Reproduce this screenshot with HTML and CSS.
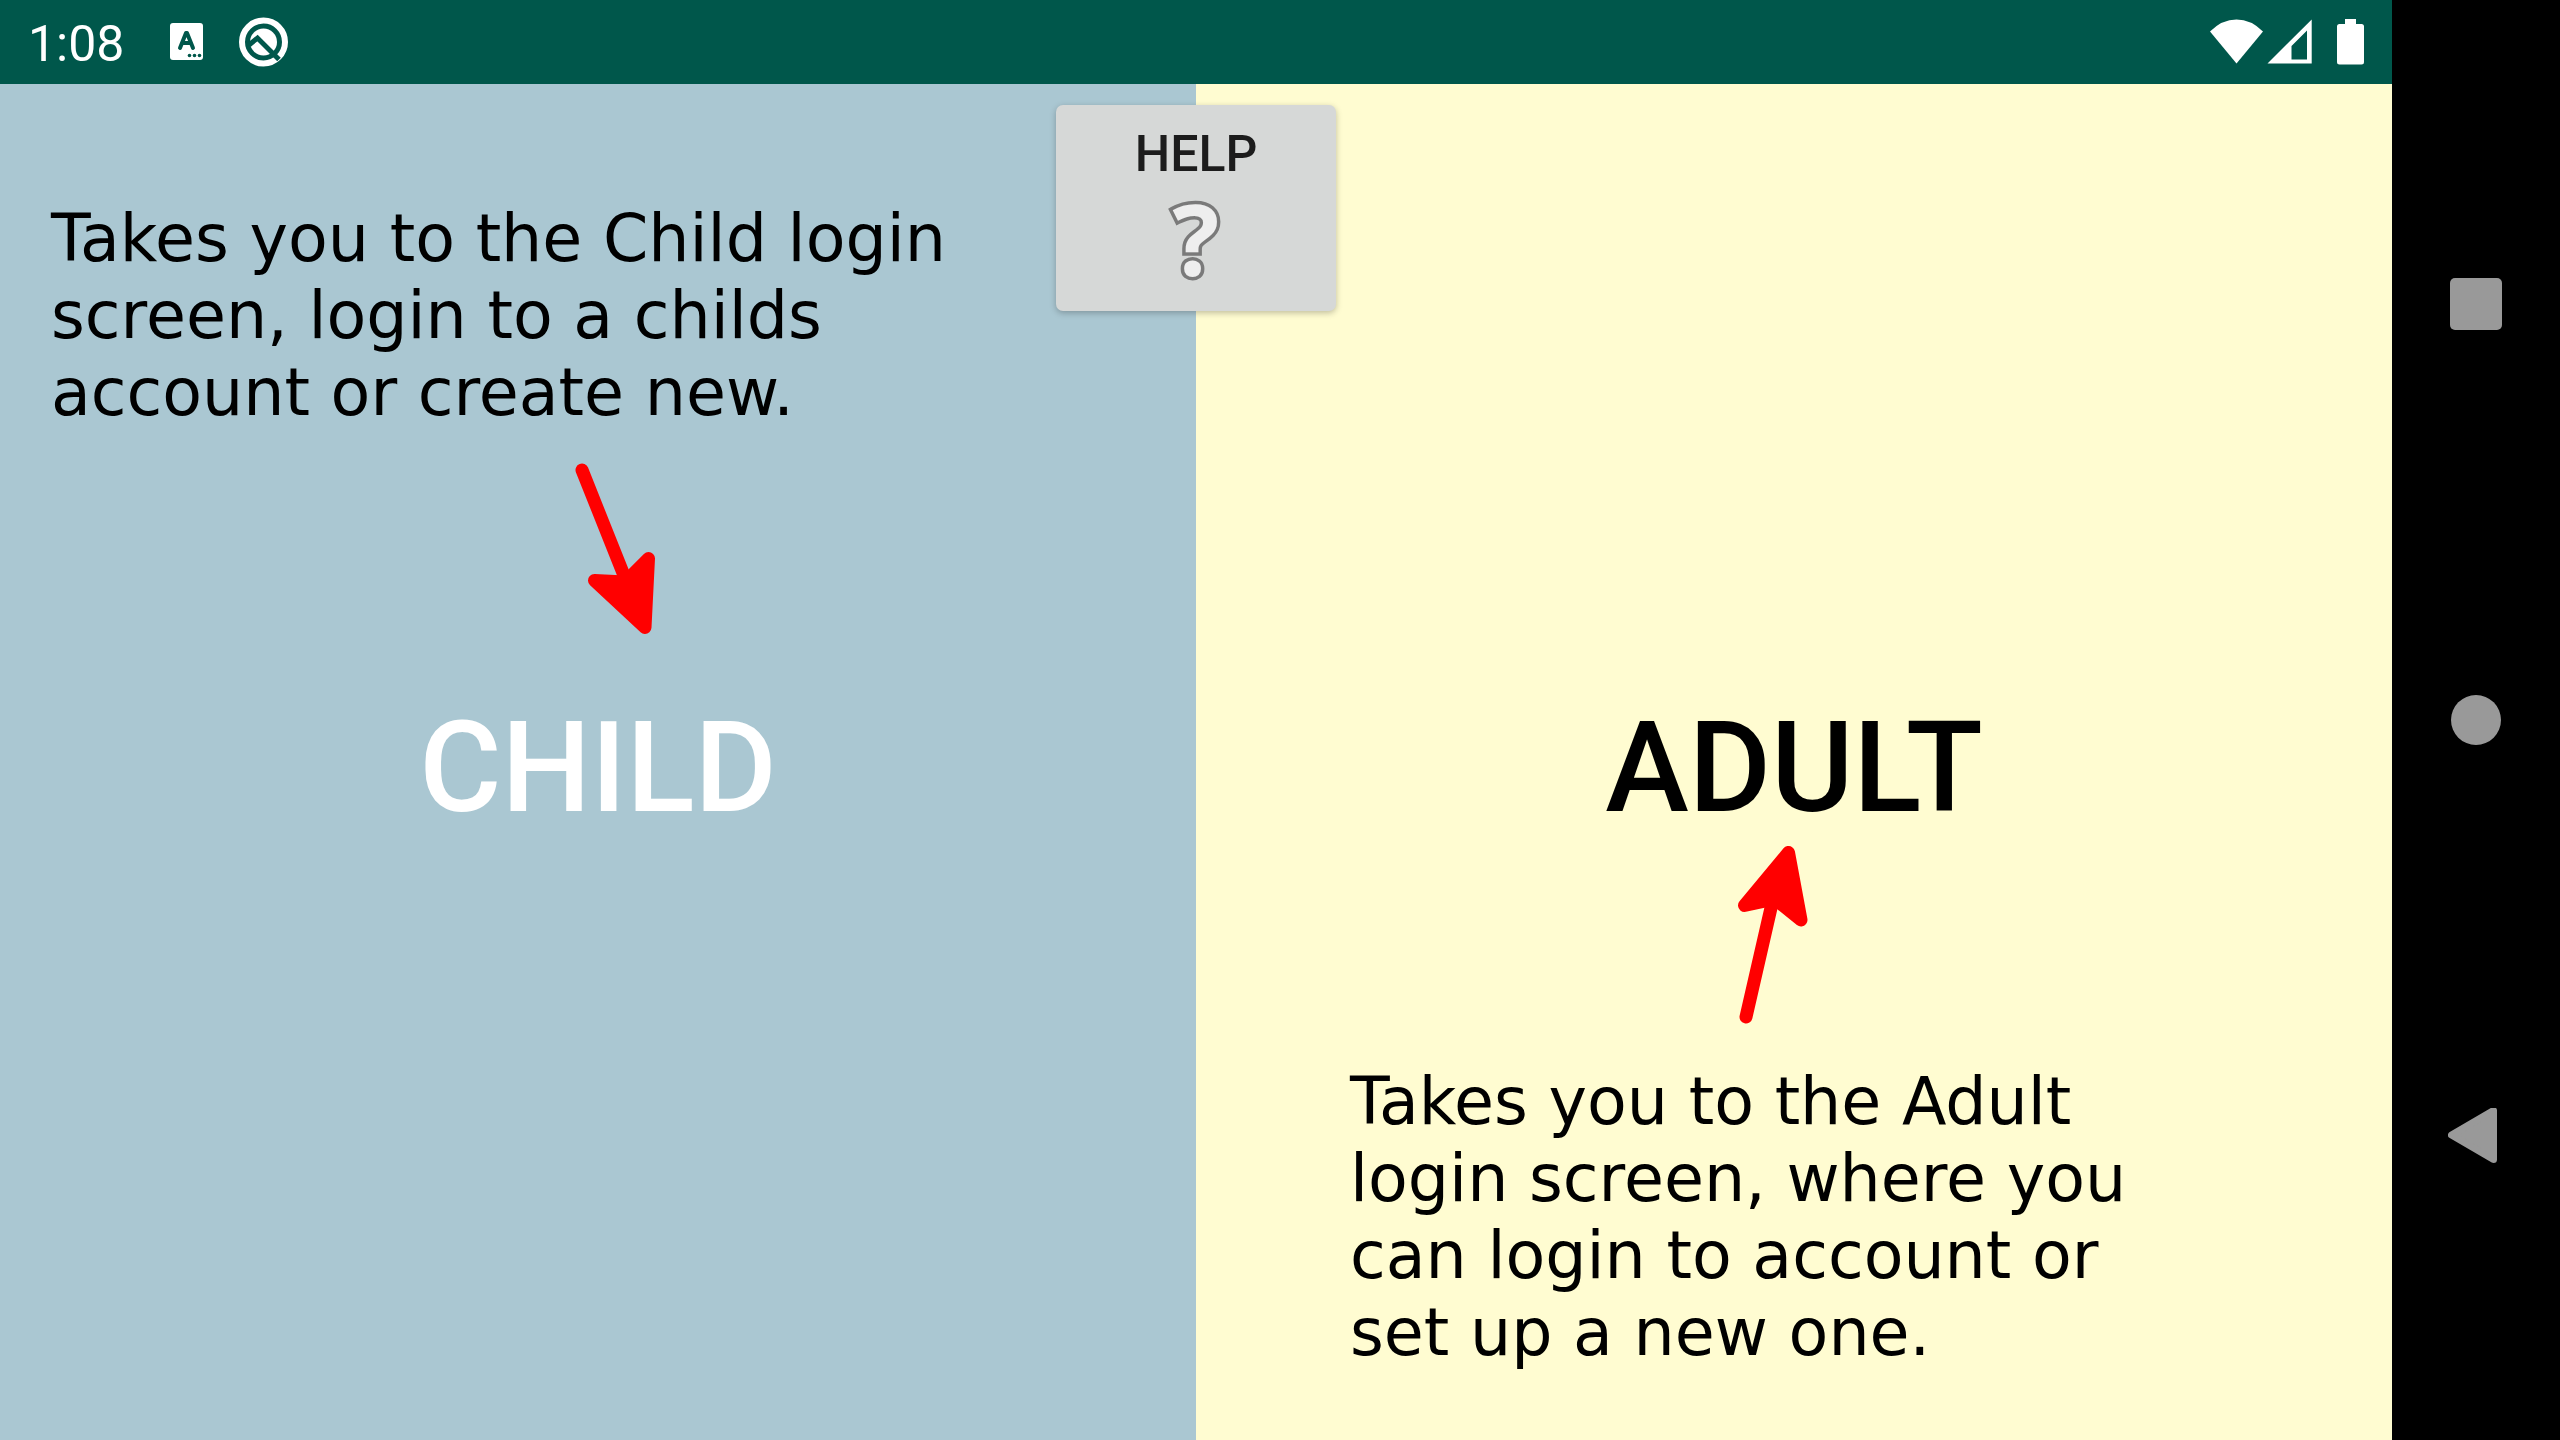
FILE: index.html
```html
<!DOCTYPE html>
<html lang="en">
<head>
<meta charset="utf-8">
<meta name="viewport" content="width=device-width, initial-scale=1">
<title>Choose login</title>
<link rel="stylesheet" href="styles.css">
</head>
<body>
<div class="device">
  <div class="app">
    <header class="status-bar">
      <time class="clock">1:08</time>
      <svg class="notice-keyboard" width="34" height="38" viewBox="0 0 34 38" aria-hidden="true">
        <rect x="0" y="0" width="33" height="37" rx="3" fill="#fff"/>
        <path d="M10 25 16 10h1L23 25M12 20h9" fill="none" stroke="#00574b" stroke-width="4" stroke-linecap="round" stroke-linejoin="round"/>
        <g fill="#00574b"><circle cx="19.5" cy="32.5" r="1.8"/><circle cx="24.5" cy="32.5" r="1.8"/><circle cx="29.5" cy="32.5" r="1.8"/></g>
      </svg>
      <svg class="notice-q" width="50" height="50" viewBox="0 0 50 50" aria-hidden="true">
        <circle cx="24.5" cy="25" r="21.5" fill="none" stroke="#fff" stroke-width="6"/>
        <circle cx="24.5" cy="25" r="13.5" fill="#fff"/>
        <path d="M10 28 18.5 21 40 42.5" fill="none" stroke="#00574b" stroke-width="5"/>
      </svg>
      <div class="system-icons">
        <svg width="54" height="46" viewBox="0 0 54 46" aria-hidden="true"><path d="M0 12.5Q12 .5 26.5.5T53 12.5L26.5 44.5Z" fill="#fff"/></svg>
        <svg width="46" height="46" viewBox="0 0 46 46" aria-hidden="true"><path fill-rule="evenodd" d="M44.7.5V44.5H.5ZM40 11.5 24.5 27V40.5H40Z" fill="#fff"/></svg>
        <svg class="battery" width="28" height="46" viewBox="0 0 28 46" aria-hidden="true"><path d="M8 0H19V5H24.5Q27 5 27 7.5V43Q27 45.5 24.5 45.5H2.5Q0 45.5 0 43V7.5Q0 5 2.5 5H8Z" fill="#fff"/></svg>
      </div>
    </header>
    <main class="panes">
      <section class="pane pane-child">
        <button class="choice" type="button">CHILD</button>
        <div class="note">
          <p class="note-text">Takes you to the Child login screen, login to a childs account or create new.</p>
          <svg class="arrow-down" width="80" height="172" viewBox="0 0 80 172" aria-hidden="true">
            <g fill="red" stroke="red" stroke-width="13" stroke-linecap="round" stroke-linejoin="round"><path d="M7 7 60 140"/><path d="M70 164.5 19.5 117.5 50 119 73.5 95.5Z"/></g>
          </svg>
        </div>
      </section>
      <section class="pane pane-adult">
        <button class="choice" type="button">ADULT</button>
        <div class="note">
          <svg class="arrow-up" width="70" height="178" viewBox="0 0 70 178" aria-hidden="true">
            <g fill="red" stroke="red" stroke-width="13" stroke-linecap="round" stroke-linejoin="round"><path d="M8 171 38 40"/><path d="M50.5 6.5 6.5 59.5 37 53 63 74Z"/></g>
          </svg>
          <p class="note-text">Takes you to the Adult login screen, where you can login to account or set up a new one.</p>
        </div>
      </section>
      <button class="help" type="button"><span>HELP</span><span class="help-mark" aria-hidden="true">?</span></button>
    </main>
  </div>
  <nav class="nav-bar" aria-label="System navigation">
    <button type="button" aria-label="Recent apps"><svg width="56" height="56" viewBox="0 0 56 56"><rect x="2" y="2" width="52" height="52" rx="5"/></svg></button>
    <button type="button" aria-label="Home"><svg width="56" height="56" viewBox="0 0 56 56"><circle cx="28" cy="28" r="25"/></svg></button>
    <button type="button" aria-label="Back"><svg width="56" height="56" viewBox="0 0 56 56"><path d="M3.500 27 45.500 2.500V51.500Z" stroke="#999" stroke-width="7" stroke-linejoin="round"/></svg></button>
  </nav>
</div>
</body>
</html>
```
FILE: styles.css
```css
* {
  box-sizing: border-box;
}

body {
  margin: 0;
  background: #000;
  font-family: Roboto, sans-serif;
}

button {
  border: 0;
  padding: 0;
  background: none;
  color: inherit;
  font: inherit;
  cursor: pointer;
}

svg {
  display: block;
  flex: none;
}

.device {
  display: flex;
  min-height: 100vh;
}

.app {
  flex: 1;
  display: flex;
  flex-direction: column;
}

.status-bar {
  display: flex;
  align-items: center;
  height: 84px;
  padding: 0 27px 0 28px;
  background: #00574b;
  color: #fff;
}

.clock {
  margin-top: 4px;
  font-size: 50px;
  line-height: 60px;
}

.notice-keyboard {
  margin-left: 46px;
}

.notice-q {
  margin-left: 35px;
}

.system-icons {
  display: flex;
  gap: 3px;
  margin-left: auto;
}

.battery {
  margin-left: 21px;
}

.panes {
  position: relative;
  flex: 1;
  display: grid;
  grid-template-columns: 1fr 1fr;
}

.pane {
  display: grid;
}

.pane-child {
  background: #aac7d2;
  color: #fff;
}

.pane-adult {
  background: #fffcd1;
  color: #000;
}

.choice,
.note {
  grid-area: 1 / 1;
}

.choice {
  padding-top: 12px;
  font-size: 126px;
  font-weight: 500;
}

.note {
  display: flex;
  flex-direction: column;
  color: #000;
  pointer-events: none;
}

.pane-child .note {
  padding: 116px 51px 0;
}

.pane-adult .note {
  justify-content: flex-end;
  padding: 0 154px 69px;
}

.note-text {
  max-width: 920px;
  margin: 0;
  font-family: "DejaVu Sans", sans-serif;
  font-size: 65px;
  line-height: 77px;
}

.pane-adult .note-text {
  max-width: 810px;
}

.arrow-down {
  margin: 32px 0 0 524px;
}

.arrow-up {
  margin: 0 0 39px 388px;
}

.help {
  position: absolute;
  top: 21px;
  left: 50%;
  display: flex;
  flex-direction: column;
  align-items: center;
  width: 280px;
  height: 206px;
  margin-left: -140px;
  padding-top: 19px;
  border-radius: 7px;
  background: #d6d8d7;
  box-shadow: 0 2px 6px rgba(0, 0, 0, 0.25);
  color: #1c1c1c;
  font-size: 50px;
  font-weight: 500;
  line-height: 60px;
}

.help-mark {
  color: #eee;
  font-family: "Open Sans", sans-serif;
  font-size: 98px;
  font-weight: 700;
  line-height: 108px;
  paint-order: stroke fill;
  -webkit-text-stroke: 7px #7a7a7a;
}

.nav-bar {
  display: flex;
  flex-direction: column;
  justify-content: space-between;
  width: 168px;
  padding: 220px 0;
  background: #000;
}

.nav-bar button {
  display: grid;
  place-items: center;
  height: 168px;
  fill: #999;
}
```
